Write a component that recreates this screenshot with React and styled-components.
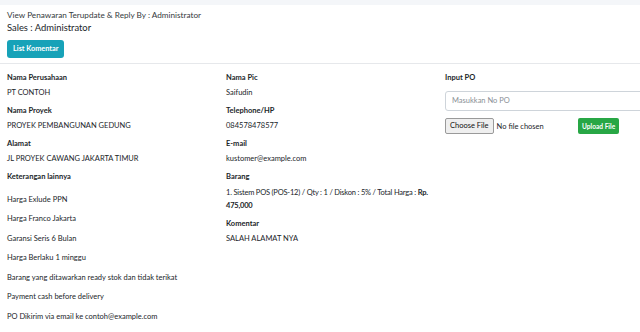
import React from "react";
import styled, { createGlobalStyle } from "styled-components";

const GlobalStyle = createGlobalStyle`
  html, body {
    margin: 0;
    padding: 0;
    background: #f4f6f9;
    overflow: hidden;
  }
  body {
    font-family: Lato, "Open Sans", sans-serif;
    color: #212529;
  }
`;

const Page = styled.div`
  padding-top: 5px;
  width: 640px;
  height: 332px;
  overflow: hidden;
`;

const Card = styled.div`
  background: #fff;
  width: 657px;
  min-height: 327px;
`;

const CardHeader = styled.div`
  padding: 4px 7px 5px;
  border-bottom: 1px solid #e6e8eb;
`;

const SubTitle = styled.div`
  font-size: 8.2px;
  line-height: 12px;
  color: #343a40;
`;

const Title = styled.div`
  font-size: 9.4px;
  line-height: 14px;
  color: #212529;
`;

const InfoButton = styled.button`
  margin-top: 3px;
  background: #17a2b8;
  color: #fff;
  border: none;
  border-radius: 3px;
  font-family: inherit;
  font-size: 7.3px;
  font-weight: 700;
  height: 18px;
  padding: 0 6px;
`;

const Row = styled.div`
  display: grid;
  grid-template-columns: repeat(3, 219px);
  padding-top: 8px;
`;

const Col = styled.div`
  padding: 0 7px;
`;

const Field = styled.div`
  margin-bottom: 6px;
`;

const Label = styled.div`
  font-size: 7.5px;
  font-weight: 700;
  line-height: 12px;
  margin-bottom: 3px;
`;

const Value = styled.div`
  font-size: 7.5px;
  line-height: ${(p) => (p.$tight ? "13px" : "12px")};
  letter-spacing: ${(p) => (p.$tight ? "-0.2px" : "0")};
`;

const Strong = styled.b`
  font-weight: 700;
`;

const NoteList = styled.div`
  display: flex;
  flex-direction: column;
  gap: 7.5px;
  margin-top: 11px;
`;

const TextInput = styled.input`
  box-sizing: border-box;
  width: 100%;
  height: 20px;
  margin-top: 4px;
  border: 1px solid #ced4da;
  border-radius: 3px;
  padding: 0 6px;
  font-family: inherit;
  font-size: 7.5px;
  &::placeholder {
    color: #8a9096;
  }
`;

const UploadRow = styled.div`
  display: flex;
  align-items: center;
  gap: 5px;
  margin-top: 7px;
`;

const FileInput = styled.input`
  width: 128px;
  font-family: inherit;
  font-size: 7.5px;
  color: #212529;
  &::file-selector-button {
    font-family: inherit;
    font-size: 7.5px;
    height: 16px;
    padding: 0 4px;
    margin-right: 3px;
    background: #efefef;
    border: 1px solid #9a9a9a;
    border-radius: 2px;
    color: #111;
  }
`;

const SuccessButton = styled.button`
  background: #28a745;
  color: #fff;
  border: none;
  border-radius: 2px;
  font-family: inherit;
  font-size: 6.6px;
  font-weight: 700;
  height: 16px;
  padding: 0 4px;
`;

const notes = [
  "Harga Exlude PPN",
  "Harga Franco Jakarta",
  "Garansi Seris 6 Bulan",
  "Harga Berlaku 1 minggu",
  "Barang yang ditawarkan ready stok dan tidak terikat",
  "Payment cash before delivery",
  "PO Dikirim via email ke contoh@example.com",
];

export default function App() {
  return (
    <>
      <GlobalStyle />
      <Page>
        <Card>
          <CardHeader>
            <SubTitle>View Penawaran Terupdate &amp; Reply By : Administrator</SubTitle>
            <Title>Sales : Administrator</Title>
            <InfoButton>List Komentar</InfoButton>
          </CardHeader>
          <Row>
            <Col>
              <Field>
                <Label>Nama Perusahaan</Label>
                <Value>PT CONTOH</Value>
              </Field>
              <Field>
                <Label>Nama Proyek</Label>
                <Value>PROYEK PEMBANGUNAN GEDUNG</Value>
              </Field>
              <Field>
                <Label>Alamat</Label>
                <Value>JL PROYEK CAWANG JAKARTA TIMUR</Value>
              </Field>
              <Field>
                <Label>Keterangan lainnya</Label>
                <NoteList>
                  {notes.map((n) => (
                    <Value key={n}>{n}</Value>
                  ))}
                </NoteList>
              </Field>
            </Col>
            <Col>
              <Field>
                <Label>Nama Pic</Label>
                <Value>Saifudin</Value>
              </Field>
              <Field>
                <Label>Telephone/HP</Label>
                <Value>084578478577</Value>
              </Field>
              <Field>
                <Label>E-mail</Label>
                <Value>kustomer@example.com</Value>
              </Field>
              <Field>
                <Label>Barang</Label>
                <Value $tight>
                  1. Sistem POS (POS-12) / Qty : 1 / Diskon : 5% / Total Harga : <Strong>Rp.</Strong>{" "}
                  <Strong>475,000</Strong>
                </Value>
              </Field>
              <Field>
                <Label>Komentar</Label>
                <Value>SALAH ALAMAT NYA</Value>
              </Field>
            </Col>
            <Col>
              <Field>
                <Label>Input PO</Label>
                <TextInput placeholder="Masukkan No PO" />
              </Field>
              <UploadRow>
                <FileInput type="file" />
                <SuccessButton>Upload File</SuccessButton>
              </UploadRow>
            </Col>
          </Row>
        </Card>
      </Page>
    </>
  );
}
